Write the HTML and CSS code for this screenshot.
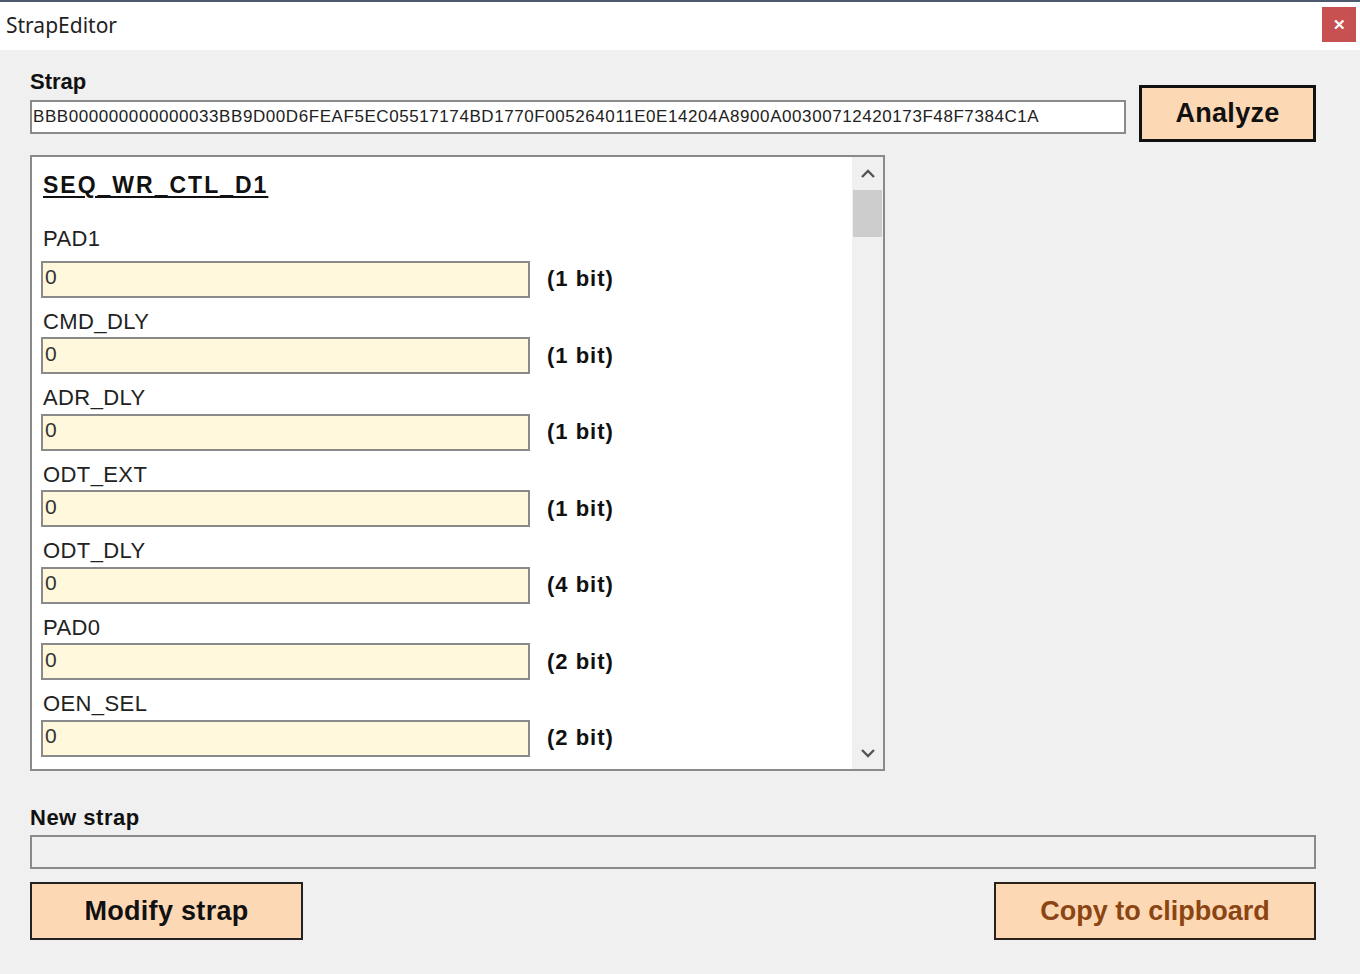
FILE: index.html
```html
<!DOCTYPE html>
<html lang="en">
<head>
<meta charset="UTF-8">
<title>StrapEditor</title>
<meta name="viewport" content="width=device-width,initial-scale=1">
<link rel="stylesheet" href="styles.css">
</head>
<body>

<div class="window">
  <!-- title bar -->
  <div class="titlebar">
    <span class="title">StrapEditor</span>
    <button class="close">&#x2715;</button>
  </div>

  <div class="content">
    <!-- strap input -->
    <div class="strap-row">
      <div class="strap-col">
        <div class="caption">Strap</div>
        <input class="strap-input" type="text" value="BBB000000000000033BB9D00D6FEAF5EC05517174BD1770F005264011E0E14204A8900A00300712420173F48F7384C1A">
      </div>
      <button class="btn btn-analyze">Analyze</button>
    </div>

    <!-- fields -->
    <div class="panel">
      <div class="fields">
        <div class="section-title">SEQ_WR_CTL_D1</div>

        <div class="field field-first">
          <div class="field-label">PAD1</div>
          <div class="field-row"><input class="field-input" type="text" value="0"><span class="bits">(1 bit)</span></div>
        </div>
        <div class="field">
          <div class="field-label">CMD_DLY</div>
          <div class="field-row"><input class="field-input" type="text" value="0"><span class="bits">(1 bit)</span></div>
        </div>
        <div class="field">
          <div class="field-label">ADR_DLY</div>
          <div class="field-row"><input class="field-input" type="text" value="0"><span class="bits">(1 bit)</span></div>
        </div>
        <div class="field">
          <div class="field-label">ODT_EXT</div>
          <div class="field-row"><input class="field-input" type="text" value="0"><span class="bits">(1 bit)</span></div>
        </div>
        <div class="field">
          <div class="field-label">ODT_DLY</div>
          <div class="field-row"><input class="field-input" type="text" value="0"><span class="bits">(4 bit)</span></div>
        </div>
        <div class="field">
          <div class="field-label">PAD0</div>
          <div class="field-row"><input class="field-input" type="text" value="0"><span class="bits">(2 bit)</span></div>
        </div>
        <div class="field">
          <div class="field-label">OEN_SEL</div>
          <div class="field-row"><input class="field-input" type="text" value="0"><span class="bits">(2 bit)</span></div>
        </div>
      </div>

      <!-- fake scrollbar -->
      <div class="scrollbar">
        <div class="sb-arrow">
          <svg width="16" height="10" viewBox="0 0 16 10"><path d="M2 8 L8 2 L14 8" fill="none" stroke="#555" stroke-width="2.4"/></svg>
        </div>
        <div class="sb-track"><div class="sb-thumb"></div></div>
        <div class="sb-arrow">
          <svg width="16" height="10" viewBox="0 0 16 10"><path d="M2 2 L8 8 L14 2" fill="none" stroke="#555" stroke-width="2.4"/></svg>
        </div>
      </div>
    </div>

    <!-- new strap -->
    <div class="caption caption-new">New strap</div>
    <input class="new-input" type="text" readonly>

    <div class="actions">
      <button class="btn btn-modify">Modify strap</button>
      <button class="btn btn-copy">Copy to clipboard</button>
    </div>
  </div>
</div>

</body>
</html>
```

FILE: styles.css
```css
:root{
  --bg:#f0f0f0;
  --peach:#fdd8b5;
  --border:#8a8a8a;
  --field:#fff8dc;
}
*{box-sizing:border-box;}
body{
  margin:0; background:var(--bg); font-family:"Liberation Sans", Arial, sans-serif; color:#111;
}
.window{width:1360px; height:974px; background:var(--bg);}

/* ---------- title bar ---------- */
.titlebar{
  height:50px; background:#fff; border-top:2px solid #4b5a6e;
  display:flex; align-items:center; justify-content:space-between;
  padding:0 4px 0 6px;
}
.title{font-family:"Noto Sans", sans-serif; font-size:21px; color:#222; margin-top:-2px;}
.close{
  width:34px; height:35px; background:#c75050; border:none; color:#fff;
  font-size:15px; font-weight:bold; margin-top:-3px; padding:0;
}

/* ---------- content ---------- */
.content{padding:20px 44px 0 30px;}
.caption{font-size:22px; font-weight:bold; line-height:24px;}
.strap-row{display:flex; align-items:flex-start;}
.strap-col{flex:1;}
.strap-input{
  display:block; width:100%; height:34px; margin-top:6px;
  border:2px solid var(--border); background:#fff;
  font-family:"Liberation Sans", Arial, sans-serif; font-size:17px; letter-spacing:0.57px;
  color:#222; padding:0 1px;
}
.btn{
  background:var(--peach); font-family:"Liberation Sans", Arial, sans-serif;
  font-size:27px; font-weight:bold; color:#111; padding:0;
}
.btn-analyze{
  width:177px; height:57px; margin:15px 0 0 13px; border:3px solid #111; letter-spacing:0.3px;
}

/* ---------- fields panel ---------- */
.panel{
  margin-top:13px; width:855px; height:616px; border:2px solid var(--border);
  background:#fff; display:flex;
}
.fields{flex:1; overflow:hidden; padding:14px 0 0 9px;}
.section-title{
  font-size:23px; font-weight:bold; line-height:28px; letter-spacing:2px;
  text-decoration:underline; text-underline-offset:3px; text-decoration-thickness:2px;
  margin:0 0 28px 2px;
}
.field{margin-top:12px;}
.field-first{margin-top:0;}
.field-label{font-size:22px; line-height:24px; letter-spacing:0.4px; color:#222; padding-left:2px;}
.field-row{display:flex; align-items:center; margin-top:3.5px;}
.field-first .field-row{margin-top:9.5px;}
.field-input{
  width:489px; height:37px; border:2px solid var(--border); background:var(--field);
  font-family:"Liberation Sans", Arial, sans-serif; font-size:21px; color:#333;
  padding:0 2px 4px;
}
.bits{margin-left:17px; font-size:22px; font-weight:bold; letter-spacing:1px;}

.scrollbar{width:31px; background:var(--bg); display:flex; flex-direction:column;}
.sb-arrow{height:33px; display:flex; align-items:center; justify-content:center;}
.sb-track{flex:1; padding:0 1px;}
.sb-thumb{height:47px; background:#cdcdcd;}

/* ---------- bottom ---------- */
.caption-new{margin-top:35px; letter-spacing:0.5px;}
.new-input{
  display:block; width:100%; height:34px; margin-top:5px;
  border:2px solid var(--border); background:var(--bg);
}
.actions{display:flex; justify-content:space-between; margin-top:13px;}
.btn-modify{width:273px; height:58px; border:2px solid #222; letter-spacing:0.3px;}
.btn-copy{width:322px; height:58px; border:2px solid #2a2218; color:#8b4513;}
```
